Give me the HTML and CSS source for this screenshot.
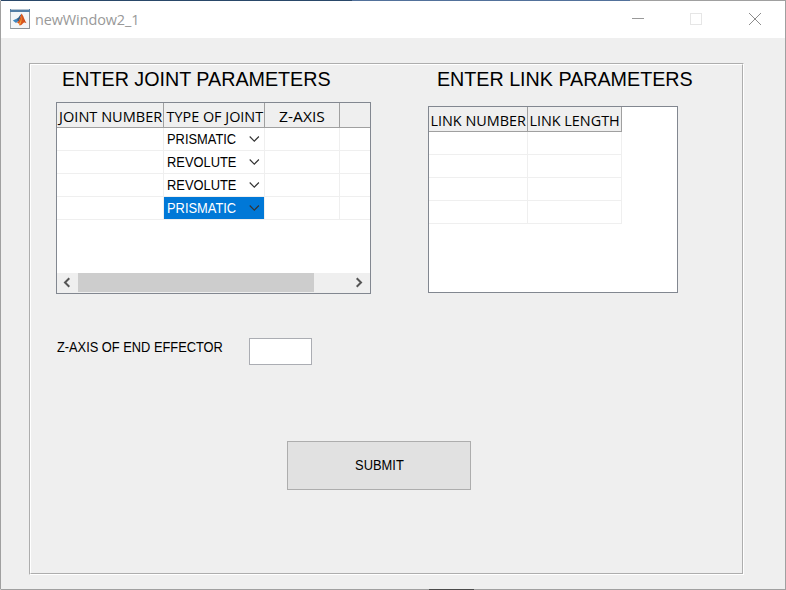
FILE: index.html
```html
<!DOCTYPE html>
<html lang="en">
<head>
<meta charset="utf-8">
<title>newWindow2_1</title>
<link rel="stylesheet" href="styles.css">
</head>
<body>
<div class="window">
  <header class="titlebar">
    <svg class="logo" width="20" height="20" viewBox="0 0 20 20">
      <rect x=".5" y=".5" width="19" height="19" fill="#f3f5f7" stroke="#a5abb0"/>
      <path d="M.5 19.500h19v-17" fill="none" stroke="#8b9298"/>
      <rect x="0" y="0" width="20" height="3" fill="#527da5"/>
      <path d="M1 .5h18" stroke="#b4c4d2"/>
      <path d="M2.800 11.500L7 9.600 9 11.600 6 14z" fill="#3f86bd"/>
      <path d="M7 9.600C9 8.700 9.700 6 11.400 5L9.500 11.200 8 13z" fill="#315d87"/>
      <path d="M11.400 4.600C13.400 6 14.300 11 16.500 14.300c-1.800-1.600-3-.8-4.200.7-1 1.200-2 1.600-2.700 1.400C9 14.500 8 13.500 6.400 14c3-1.200 3.800-5.500 5-9.400z" fill="#d8551d"/>
      <path d="M11.200 6c.2 3.500-.4 6.500-2.300 8.500l.9 1.700c1.700-2 2.200-6 1.400-10.200z" fill="#f2a33a"/>
      <path d="M12.300 6c1 3 2 6.300 4.200 8.200C14.500 13 13.500 10 12.300 6z" fill="#8a2418"/>
    </svg>
    <span class="caption">newWindow2_1</span>
    <svg class="controls" width="130" height="14" viewBox="0 0 130 14" fill="none" shape-rendering="crispEdges">
      <path d="M0 6.500h12" stroke="#999"/>
      <rect x="58.500" y="1.500" width="11" height="11" stroke="#e6e6e6"/>
      <path d="M117 1l12 12M129 1l-12 12" stroke="#8c8c8c" shape-rendering="auto"/>
    </svg>
  </header>
  <main class="panel">
    <div class="panel-inner">
      <div class="tables">
        <section class="joints">
          <h2>ENTER JOINT PARAMETERS</h2>
          <div class="table joint-table">
            <div class="row head"><span><b class="number">JOINT NUMBER</b></span><span><b>TYPE OF JOINT</b></span><span><b class="axis">Z-AXIS</b></span><span></span></div>
            <div class="row"><span></span><span class="pick"><i>PRISMATIC</i><svg width="11" height="6" viewBox="0 0 11 6"><path d="M.7.500l4.600 4.600L9.900.500"/></svg></span><span></span><span></span></div>
            <div class="row"><span></span><span class="pick"><i>REVOLUTE</i><svg width="11" height="6" viewBox="0 0 11 6"><path d="M.7.500l4.600 4.600L9.900.500"/></svg></span><span></span><span></span></div>
            <div class="row"><span></span><span class="pick"><i>REVOLUTE</i><svg width="11" height="6" viewBox="0 0 11 6"><path d="M.7.500l4.600 4.600L9.900.500"/></svg></span><span></span><span></span></div>
            <div class="row"><span></span><span class="pick selected"><i>PRISMATIC</i><svg width="11" height="6" viewBox="0 0 11 6"><path d="M.7.500l4.600 4.600L9.900.500"/></svg></span><span></span><span></span></div>
            <div class="scrollbar">
              <svg width="21" height="19" viewBox="0 0 21 19"><path d="M12.300 5.300L8 9.500l4.300 4.200"/></svg>
              <div class="thumb"></div>
              <svg width="21" height="19" viewBox="0 0 21 19"><path d="M7.700 5.300L12 9.500l-4.300 4.200"/></svg>
            </div>
          </div>
        </section>
        <section class="links">
          <h2>ENTER LINK PARAMETERS</h2>
          <div class="table link-table">
            <div class="row head"><span><b>LINK NUMBER</b></span><span><b>LINK LENGTH</b></span></div>
            <div class="row"><span></span><span></span></div>
            <div class="row"><span></span><span></span></div>
            <div class="row"><span></span><span></span></div>
            <div class="row"><span></span><span></span></div>
          </div>
        </section>
      </div>
      <div class="effector">
        <label for="axis">Z-AXIS OF END EFFECTOR</label>
        <input id="axis" type="text">
      </div>
      <button class="submit" type="button"><span>SUBMIT</span></button>
    </div>
  </main>
</div>
</body>
</html>
```
FILE: styles.css
```css
* { box-sizing: border-box; }
body { margin: 0; font-family: "Liberation Sans", sans-serif; color: #000; overflow: hidden; }
.window {
  width: 786px; height: 590px;
  border: 1px solid #a0a0a0; border-top-color: transparent; border-bottom-color: transparent;
  background:
    linear-gradient(90deg, #294769 0 352px, #52719b 352px 630px, #a0a0a0 630px) top / 100% 1px no-repeat border-box,
    linear-gradient(90deg, #a0a0a0 0 429px, #4a4a4a 429px 474px, #a0a0a0 474px) bottom / 100% 1px no-repeat border-box,
    #efefef;
}
.titlebar { height: 37px; background: #fff; display: flex; align-items: flex-start; padding: 8px 23px 0 9px; }
.logo { display: block; }
.caption { margin-left: 5px; font: 15px/20px "Open Sans", sans-serif; color: #999; white-space: nowrap; letter-spacing: -.1px; transform: scaleX(.963); transform-origin: left; }
.controls { margin: 3px 0 0 auto; }
.panel { margin: 25px 0 0 28px; width: 715px; height: 512px; border: 1px solid; border-color: #adadad #fff #fff #adadad; }
.panel-inner { height: 100%; border: 1px solid; border-color: #fff #adadad #adadad #fff; padding-left: 25px; }
.tables { display: flex; gap: 57px; height: 229px; }
h2 { margin: 0; font-weight: 400; font-size: 21px; line-height: 28px; white-space: nowrap; transform: scaleX(.938); transform-origin: left; }
.joints { width: 315px; }
.joints h2 { padding-left: 6.5px; height: 37px; }
.links { width: 270px; }
.links h2 { padding-left: 9.5px; height: 41px; }
.table { border: 1px solid #828790; background: #fff; display: flex; flex-direction: column; }
.joint-table { width: 315px; height: 192px; }
.link-table { width: 250px; height: 187px; }
.row { display: grid; grid-template-rows: 100%; height: 23px; flex: none; }
.joint-table .row { grid-template-columns: 107px 101px 75px 30px; }
.link-table .row { grid-template-columns: 99px 94px; }
.row > span { border-right: 1px solid #efefef; border-bottom: 1px solid #efefef; min-width: 0; }
.joint-table .row > span:last-child { border-right: 0; }
.row.head { height: 25px; }
.row.head > span { background: #efefef; border-color: #a0a0a0; display: flex; justify-content: center; white-space: nowrap; }
.head b { font: 15px/27px "Open Sans", sans-serif; transform: translateX(.5px) scaleX(.96); }
.head b.number { transform: translateX(.5px) scaleX(.97); }
.head b.axis { transform: scaleX(1.04); }
.pick { display: flex; align-items: center; justify-content: space-between; padding: 0 4px 0 3px; }
.pick i { font: 14px/22px "Liberation Sans", sans-serif; transform: scaleX(.92); transform-origin: left; width: 75px; }
.pick path { fill: none; stroke: #333; stroke-width: 1.1; }
.selected { background: #0078d7; color: #fff; }
.scrollbar { margin-top: auto; height: 20px; background: #efefef; display: flex; }
.scrollbar svg path { fill: none; stroke: #555; stroke-width: 2; }
.thumb { width: 236px; height: 19px; background: #cdcdcd; margin-right: 35px; }
.effector { display: flex; margin-top: 44px; height: 27px; }
label { width: 193px; padding-left: 1px; font-size: 14px; line-height: 18px; white-space: nowrap; transform: scaleX(.917); transform-origin: left; }
input { width: 63px; height: 27px; border: 1px solid #abadb3; background: #fff; padding: 2px; }
.submit { display: block; width: 184px; height: 49px; margin: 76px 0 0 231px; padding: 0 0 2px; border: 1px solid #adadad; background: #e1e1e1; font: 14px "Liberation Sans", sans-serif; color: #000; }
.submit span { display: inline-block; transform: scaleX(.92); }
```
